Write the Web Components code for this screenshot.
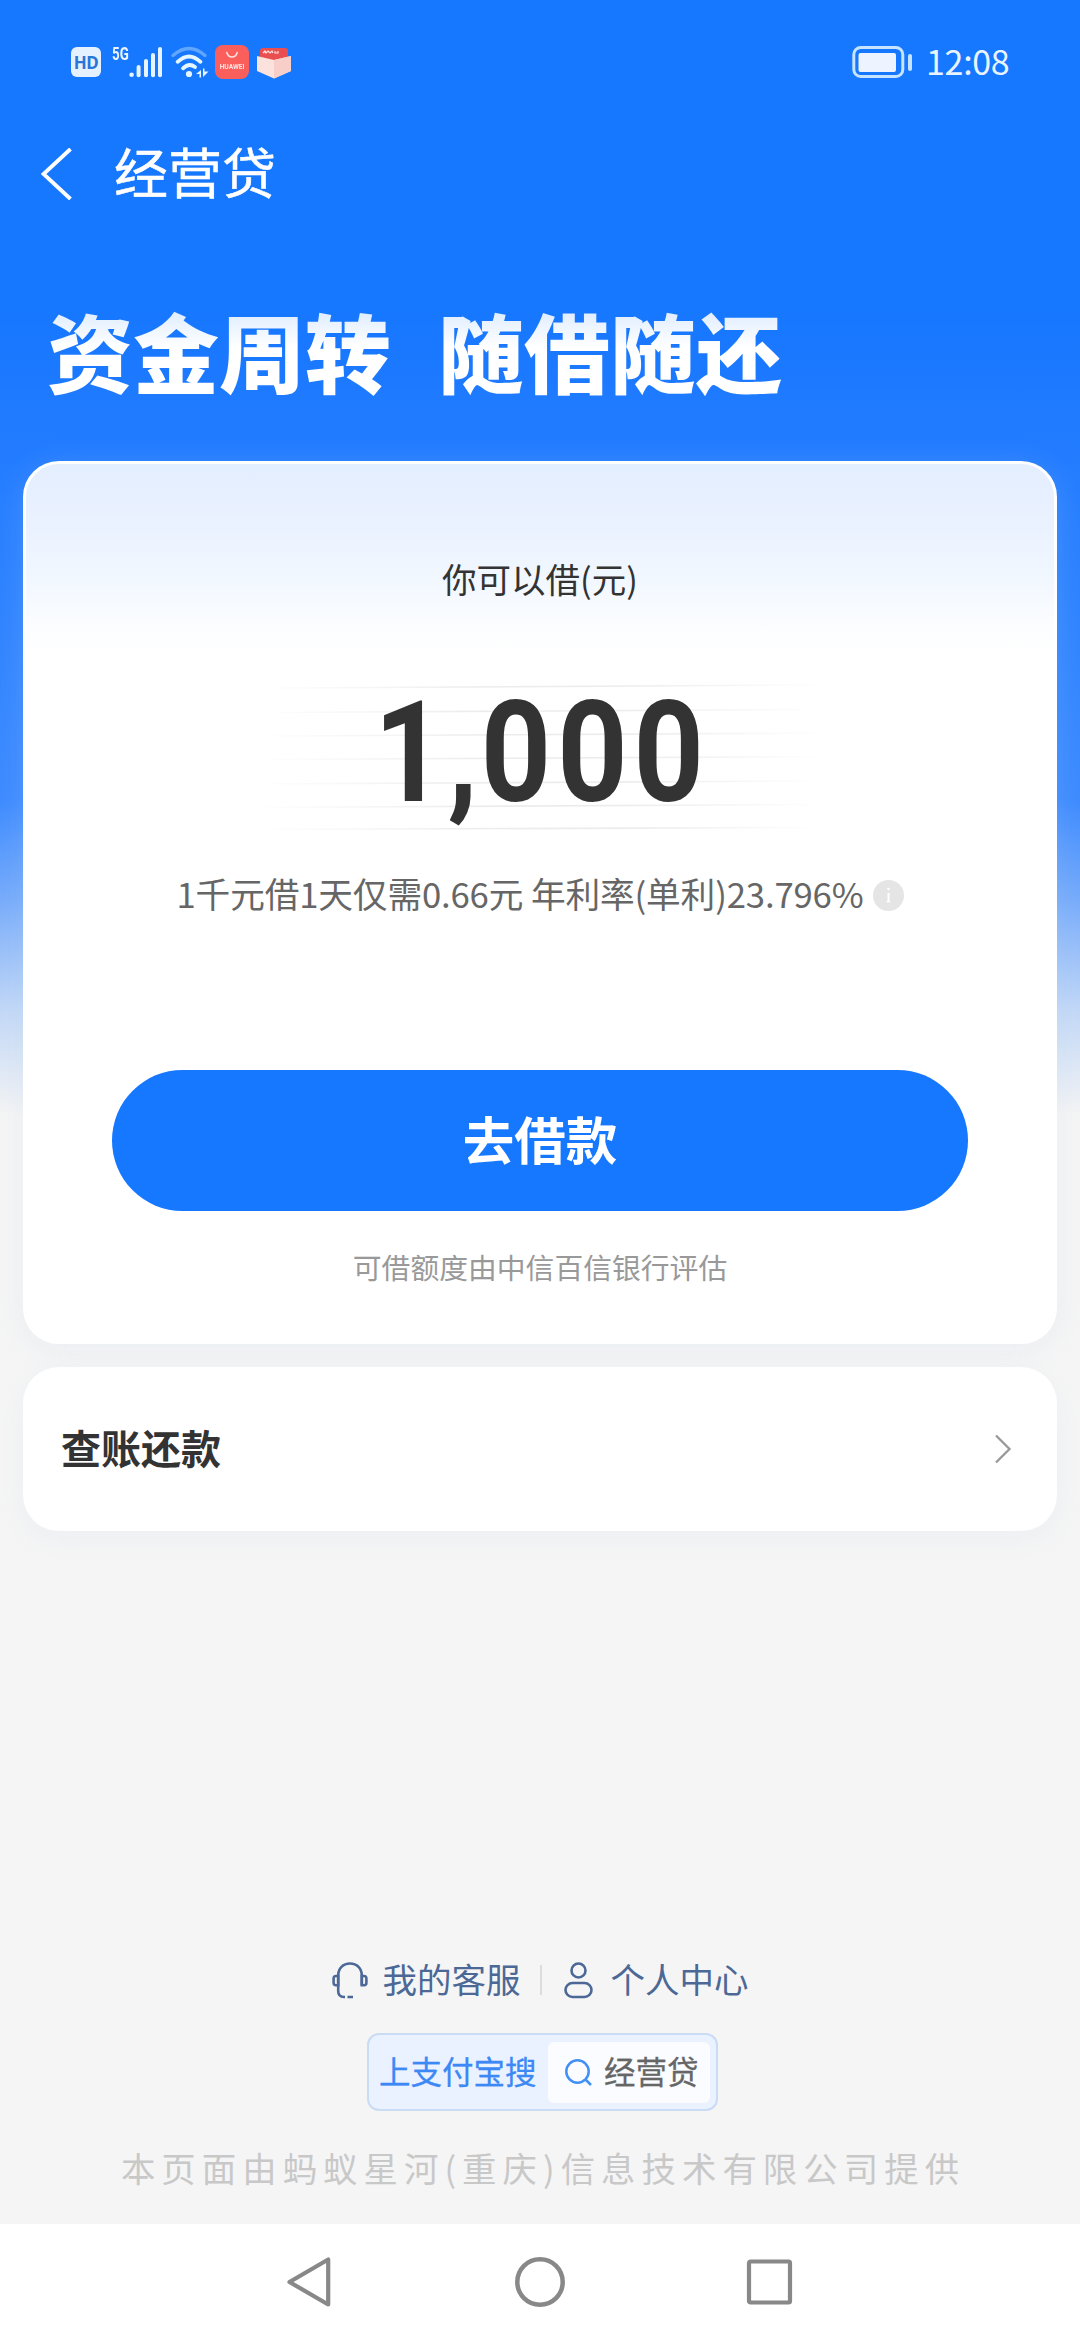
<!DOCTYPE html>
<html lang="zh-CN">
<head>
<meta charset="utf-8">
<title>经营贷</title>
<style>
html,body{margin:0;padding:0}
body{width:1080px;height:2340px;overflow:hidden;background:#f5f5f5;font-family:"Noto Sans CJK SC",sans-serif}
</style>
</head>
<body>
<loan-app></loan-app>
<script>
function define(name, markup) {
  const t = document.createElement('template');
  t.innerHTML = markup;
  customElements.define(name, class extends HTMLElement {
    constructor() {
      super();
      this.attachShadow({ mode: 'open' }).appendChild(t.content.cloneNode(true));
    }
  });
}

define('status-bar', `
<style>
:host{display:flex;height:123px;box-sizing:border-box;padding:0 71px;align-items:center;color:#eaf4ff;justify-content:space-between}
.l,.r{display:flex;align-items:center}
svg{display:block}
.hd{width:30px;height:30px;border-radius:6px;background:#e6f1ff;color:#2a75d8;font:700 17px/31px "Noto Sans",sans-serif;text-align:center;letter-spacing:-.5px}
.g{font:700 19px/19px "Roboto",sans-serif;width:17px;margin-left:11px;height:34px;margin-top:-2px;transform:scaleX(.7);transform-origin:0 0}
.bars{margin-left:0}
.wifi{margin-left:9px}
.hw{width:34px;height:34px;margin-left:6px;border-radius:8px;background:#fb5f5c;color:#fff;display:flex;flex-direction:column;align-items:center}
.hw svg{margin-top:6px}
.hw span{font:700 7px/8px "Roboto",sans-serif;margin-top:4px;white-space:nowrap;color:#ffe3e0;transform:scaleX(.95)}
.box{margin-left:8px}
.time{font:400 34px/50px "Noto Sans CJK SC",sans-serif;margin-left:13px;width:83px;white-space:nowrap;letter-spacing:-.3px;margin-top:-2px}
</style>
<div class="l">
<div class="hd">HD</div><div class="g">5G</div>
<svg class="bars" width="33" height="34" viewBox="0 0 33 34" fill="#e6f4ff"><circle cx="2.6" cy="29.8" r="2.3"/><rect x="7.6" y="20" width="4" height="12.2" rx="2"/><rect x="15" y="14" width="4" height="18.200" rx="2"/><rect x="22" y="8" width="4" height="24.200" rx="2"/><rect x="29" y="2" width="4" height="30.200" rx="2"/></svg>
<svg class="wifi" width="38" height="34" viewBox="0 0 38 34" fill="none" stroke-linecap="round" stroke-width="3.800"><path d="M2 10.500Q18 -3.500 34 10.500" stroke="#62a7ff" stroke-width="3.200"/><path d="M6.600 16.800Q18 6 29.500 16.800" stroke="#e6f6ff"/><path d="M12 23.300Q18 17.500 24 22" stroke="#e6f6ff"/><circle cx="18" cy="29" r="3.100" fill="#e6f6ff"/><path d="M30 25v7.500h-1.500v-3.500h-3.500zM32 32v-8.500h1.500v3h4z" fill="#e6f6ff"/></svg>
<div class="hw"><svg width="14" height="8" viewBox="0 0 14 8" fill="none" stroke="#ffe3e0" stroke-width="1.500" stroke-linecap="round"><path d="M1.800 1.500Q3 6 7 6T12.200 1.500"/></svg><span>HUAWEI</span></div>
<svg class="box" width="34" height="34" viewBox="0 0 34 34"><path d="M3 14V5.500Q3 3 6 3h22q3 0 3 2.500V14l-14 4z" fill="#e94f50"/><path d="M0 11l17 4 17-4v15l-17 7.500L0 26z" fill="#fbe2dc"/><path d="M17 15l17-4v15l-17 7.500z" fill="#f7cfc8"/><path d="M6 8l2-2 1 2 2-2 2 2 2-2 1 2M18 6v2h3V6" stroke="#ffe6e2" fill="none" stroke-width="1.100"/></svg>
</div>
<div class="r">
<svg width="62" height="34" viewBox="0 0 62 34"><rect x="2.800" y="2.500" width="49" height="29" rx="7" fill="none" stroke="#c6e4ff" stroke-width="3"/><rect x="7.500" y="8" width="37.500" height="19" rx="2" fill="#edf4ff"/><rect x="57" y="9" width="4" height="17" rx="2" fill="#c6e4ff"/></svg>
<div class="time">12:08</div></div>`);

define('title-bar', `
<style>
:host{display:flex;height:102px;align-items:center;padding-left:41px;color:#fff}
svg{display:block}
.t{font-size:54px;line-height:80px;margin-left:42px;margin-top:-6px;-webkit-text-stroke:.5px #fff}
</style>
<svg width="31" height="52" viewBox="0 0 31 52" fill="none" stroke="#fff" stroke-width="3.900"><path d="M29.500 1L2.500 26 29.500 51"/></svg>
<div class="t"><slot></slot></div>`);

define('hero-title', `
<style>
:host{display:flex;height:236px;box-sizing:border-box;padding:65px 0 0 47px}
.t{display:flex;gap:47px;height:120px;font-size:86px;line-height:120px;font-weight:900;color:transparent;background:linear-gradient(#e3efff 26px,#fff 58px);-webkit-background-clip:text;background-clip:text;white-space:nowrap}
</style>
<div class="t"><span><slot name="a"></slot></span><span><slot name="b"></slot></span></div>`);

define('quota-amount', `
<style>
:host{display:grid;width:620px;height:150px;color:#333}
svg,.n{grid-area:1/1}
svg{display:block}
.n{display:flex;justify-content:center;font:700 141px/140px "Roboto",sans-serif;padding-left:3px;letter-spacing:6.900px}
.n span{display:block;transform:scaleX(.87);transform-origin:50% 50%;white-space:nowrap}
</style>
<svg width="620" height="150" viewBox="0 0 620 150"><defs><linearGradient id="g" gradientUnits="userSpaceOnUse" x1="20" y1="0" x2="600" y2="0"><stop offset="0" stop-color="#eee" stop-opacity="0"/><stop offset=".4" stop-color="#ececec"/><stop offset=".65" stop-color="#ececec"/><stop offset="1" stop-color="#eee" stop-opacity="0"/></linearGradient></defs>
<g stroke="url(#g)" stroke-width="1.600"><path d="M50 5L590 2"/><path d="M50 29.500L570 26.500"/><path d="M40 53L600 50"/><path d="M40 76.500L600 73.500"/><path d="M20 101L580 98"/><path d="M20 124.500L580 121.500"/><path d="M20 146.500L580 144.500"/></g></svg>
<div class="n"><span><slot></slot></span></div>`);

define('rate-line', `
<style>
:host{display:flex;align-items:center;height:50px;color:#666;font-size:34.700px;line-height:50px;white-space:nowrap}
.i{width:31px;height:31px;border-radius:50%;background:#e5e5e5;margin-left:11px;display:flex;justify-content:center;align-items:center}
.t{width:685px;margin-top:-4px;letter-spacing:-.15px}
svg{display:block}
</style>
<div class="t"><slot></slot></div><div class="i"><svg width="5" height="17" viewBox="0 0 5 17" fill="#fff"><circle cx="2.500" cy="2" r="1.300"/><path d="M1.500 6h2v8H4.500v1.200H.5V14h1z"/></svg></div>`);

define('primary-button', `
<style>
:host{display:flex;width:856px;height:141px;border-radius:71px;background:#1677ff;color:#fff;justify-content:center;align-items:center}
span{font-size:51.500px;font-weight:700;line-height:80px;margin-top:-6px}
</style><span><slot></slot></span>`);

define('quota-card', `
<style>
:host{display:flex;flex-direction:column;align-items:center;box-sizing:border-box;height:883px;margin:0 23px;border-radius:36px;border:3px solid #fff;background:linear-gradient(#e3eeff 0,#ebf2ff 65px,#f1f7ff 110px,#fcfdff 165px,#fff 190px);box-shadow:0 6px 30px rgba(190,210,235,.2)}
.label{font-size:34.500px;line-height:50px;color:#333;margin-top:89px}
quota-amount{margin-top:80px}
.lead{letter-spacing:3.500px}
rate-line{margin-top:37px}
primary-button{margin-top:150px}
.cap{font-size:28.800px;line-height:42px;color:#999;margin-top:35px}
</style>
<div class="label">你可以借(元)</div>
<quota-amount><span class="lead">1,</span>000</quota-amount>
<rate-line>1千元借1天仅需0.66元 年利率(单利)23.796%</rate-line>
<primary-button>去借款</primary-button>
<div class="cap">可借额度由中信百信银行评估</div>`);

define('link-row', `
<style>
:host{display:flex;align-items:center;justify-content:space-between;box-sizing:border-box;height:164px;margin:23px 23px 0;padding:0 45px 0 38px;border-radius:36px;background:#fff;color:#333;box-shadow:0 8px 26px rgba(190,210,235,.16)}
span{font-size:40px;font-weight:700;line-height:60px;margin-top:-5px}
svg{display:block}
</style><span><slot></slot></span>
<svg width="18" height="30" viewBox="0 0 18 30" fill="none" stroke="#999" stroke-width="2.300"><path d="M2 1.500L15.500 15 2 28.500"/></svg>`);

define('page-footer', `
<style>
:host{display:flex;flex-direction:column;align-items:center}
.links{display:flex;align-items:center;height:50px;color:#4c6896;font-size:34.500px;line-height:50px}
.links span{margin-top:-5px}
svg{display:block}
.s{margin-left:15px}.bar{width:2px;height:30px;background:#dcdcdc;margin:0 22px 0 19px}.p{margin-left:18px}
.search{display:flex;box-sizing:border-box;width:351px;height:78px;margin:28px 0 0 5px;border:2px solid #cadbf4;border-radius:12px;background:#ebf2ff;align-items:center;padding:0 6px 0 10px;color:#3c88f5;font-size:31.500px;line-height:44px;-webkit-text-stroke:.3px currentColor}
.search>span{margin-top:-5px;width:169px;white-space:nowrap}
.kw{display:flex;align-items:center;width:162px;height:61px;border-radius:6px;background:#fafcff;box-sizing:border-box;padding-left:17px;color:#666;font-size:31.500px}
.kw span{margin:-5px 0 0 12px}
.prov{font-size:34.400px;line-height:50px;letter-spacing:6.050px;color:#c8c8c8;margin:31px 0 0 6px;white-space:nowrap}
</style>
<div class="links">
<svg width="36" height="38" viewBox="0 0 36 38" fill="none" stroke="#4c6896" stroke-width="2.600"><path d="M6.200 24.500V14.500C6.200 7.500 11 2.500 18 2.500S29.800 7.500 29.800 14.500V24.500M6.200 24.500V30Q6.200 36 12 36h1M15.500 36H21"/><path d="M6.200 15H4Q1.600 15 1.600 17.500v4.200Q1.600 24.200 4 24.200H6.200zM29.800 15H32Q34.400 15 34.400 17.500v4.200Q34.400 24.200 32 24.200H29.800z"/></svg>
<span class="s">我的客服</span><i class="bar"></i>
<svg width="29" height="38" viewBox="0 0 29 38" fill="none" stroke="#4c6896" stroke-width="2.600"><circle cx="14.500" cy="9.500" r="7"/><rect x="1.500" y="22" width="26" height="14" rx="7"/></svg>
<span class="p">个人中心</span></div>
<div class="search"><span>上支付宝搜</span><div class="kw"><svg width="27" height="28" viewBox="0 0 27 28" fill="none" stroke="#4390f5" stroke-width="2.500"><circle cx="12.500" cy="13.500" r="11.200"/><path d="M20.500 21.500L26 27"/></svg><span>经营贷</span></div></div>
<div class="prov">本页面由蚂蚁星河(重庆)信息技术有限公司提供</div>`);

define('system-nav', `
<style>
:host{display:flex;height:116px;background:#fff;justify-content:center;align-items:center;gap:180px}
svg{display:block}
</style>
<svg width="50" height="54" viewBox="0 0 50 54" fill="none" stroke="#888" stroke-width="4.200" stroke-linejoin="round"><path d="M43.200 4.500V49.500L4.500 27z"/></svg>
<svg width="50" height="50" viewBox="0 0 50 50" fill="none" stroke="#888" stroke-width="4.500"><circle cx="25" cy="25" r="22.700"/></svg>
<svg width="50" height="50" viewBox="0 0 50 50" fill="none" stroke="#888" stroke-width="4.200"><rect x="4" y="4.500" width="41" height="41" rx="1.500"/></svg>`);

define('loan-app', `
<style>
:host{display:flex;flex-direction:column;width:1080px;height:2340px;background:linear-gradient(#1677ff 0,#1677ff 310px,#237cff 450px,#2e83ff 600px,#3d8bff 800px,#77acfb 900px,#c2d8f7 1010px,#f5f5f5 1115px)}
page-footer{margin-top:424px;flex:1}
</style>
<status-bar></status-bar>
<title-bar>经营贷</title-bar>
<hero-title><span slot="a">资金周转</span><span slot="b">随借随还</span></hero-title>
<quota-card></quota-card>
<link-row>查账还款</link-row>
<page-footer></page-footer>
<system-nav></system-nav>`);
</script>
</body>
</html>
